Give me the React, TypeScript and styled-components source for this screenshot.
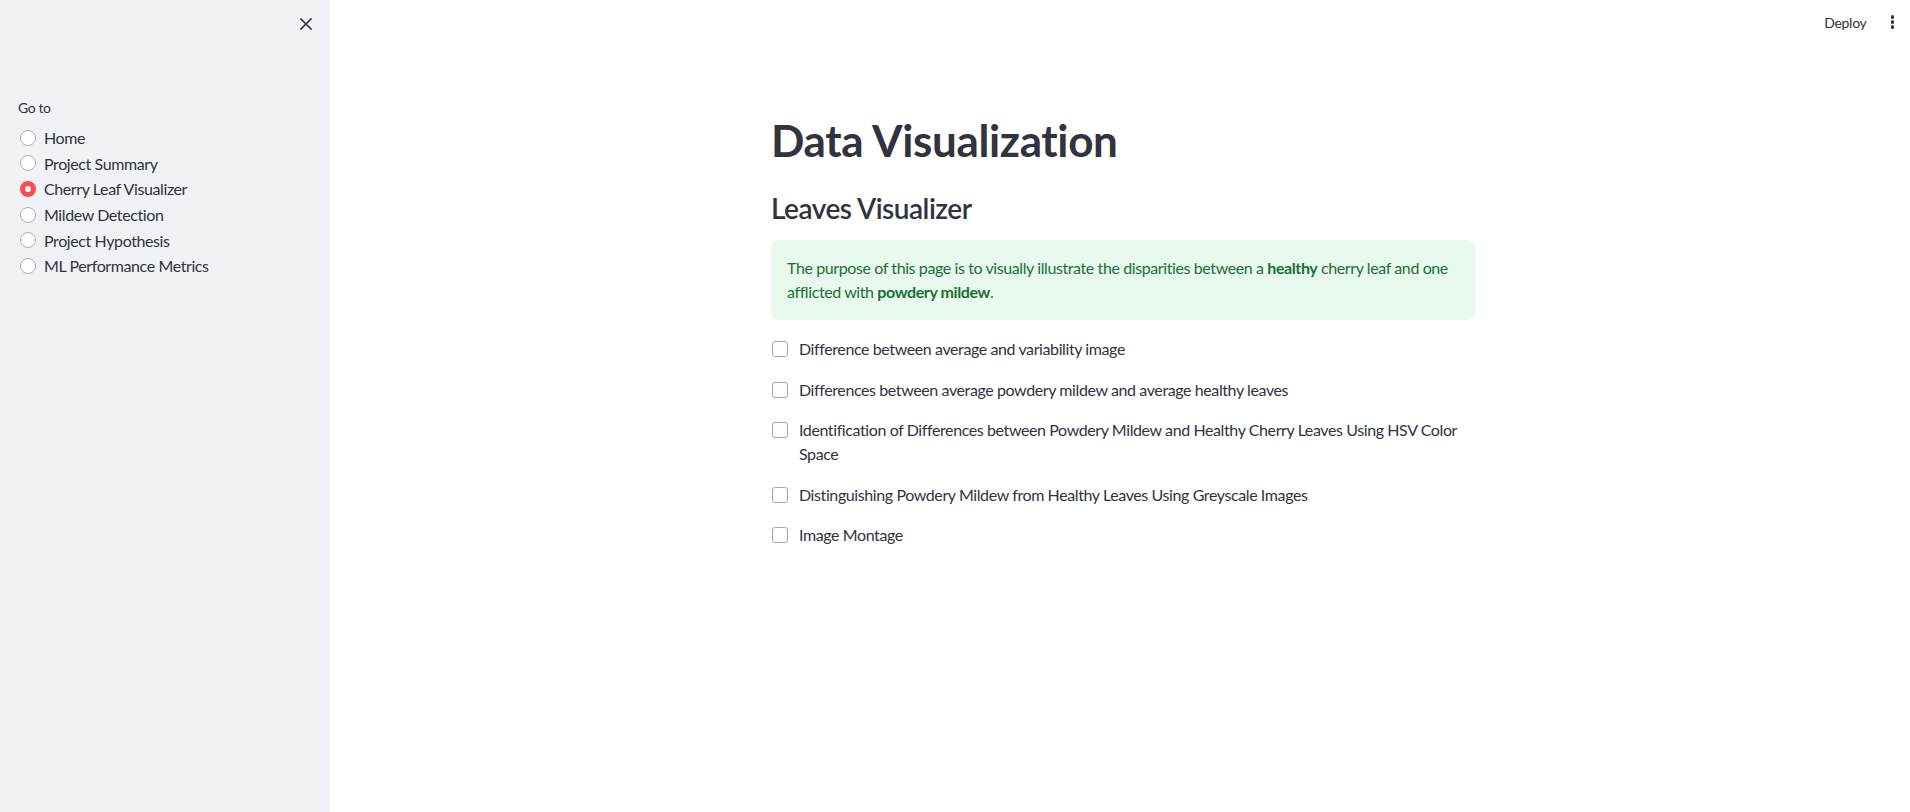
import React from "react";
import styled, { createGlobalStyle } from "styled-components";

const FONT = `Lato, "Noto Sans", sans-serif`;

const GlobalStyle = createGlobalStyle`
  html, body { margin: 0; padding: 0; }
  body {
    font-family: ${FONT};
    color: #31333f;
    background: #ffffff;
    letter-spacing: -0.025em;
  }
  * { box-sizing: border-box; }
`;

const Page = styled.div`
  display: flex;
  width: 100%;
  height: 812px;
  overflow: hidden;
`;

const Sidebar = styled.aside`
  width: 330px;
  flex-shrink: 0;
  background: #f0f2f6;
  display: flex;
  flex-direction: column;
`;

const SidebarTop = styled.div`
  height: 48px;
  display: flex;
  align-items: center;
  justify-content: flex-end;
  padding-right: 14px;
`;

const IconButton = styled.button`
  border: none;
  background: transparent;
  padding: 0;
  width: 20px;
  height: 20px;
  display: flex;
  align-items: center;
  justify-content: center;
  color: #31333f;
  cursor: pointer;
`;

const Nav = styled.div`
  padding: 50px 18px 0 18px;
  display: flex;
  flex-direction: column;
`;

const NavLabel = styled.div`
  font-size: 14px;
  line-height: 20px;
  margin-bottom: 7px;
`;

const RadioList = styled.div`
  display: flex;
  flex-direction: column;
`;

const RadioRow = styled.label`
  display: flex;
  align-items: center;
  gap: 8px;
  height: 25.6px;
  font-size: 16px;
  padding-left: 2px;
`;

const RadioDot = styled.span<{ $checked: boolean }>`
  width: 16px;
  height: 16px;
  border-radius: 50%;
  flex-shrink: 0;
  background: #ffffff;
  border: ${(p) => (p.$checked ? "5px solid #ff4b4b" : "1px solid #acaeb6")};
`;

const Main = styled.main`
  flex: 1;
  display: flex;
  flex-direction: column;
`;

const Header = styled.header`
  height: 44px;
  display: flex;
  align-items: center;
  justify-content: flex-end;
  gap: 22px;
  padding-right: 14px;
`;

const DeployButton = styled.button`
  border: none;
  background: transparent;
  font-family: ${FONT};
  font-size: 14px;
  letter-spacing: -0.02em;
  color: #31333f;
  padding: 0;
`;

const MenuDots = styled.div`
  display: flex;
  flex-direction: column;
  gap: 1.5px;
  padding: 0 2px;
`;

const Dot = styled.span`
  width: 3.5px;
  height: 3.5px;
  border-radius: 50%;
  background: #31333f;
`;

const ContentWrap = styled.div`
  display: flex;
  justify-content: center;
  padding-left: 6px;
`;

const Content = styled.div`
  width: 704px;
  padding-top: 70px;
  display: flex;
  flex-direction: column;
`;

const Title = styled.h1`
  margin: 0;
  font-size: 44px;
  line-height: 53px;
  font-weight: 700;
  letter-spacing: -0.35px;
  color: #31333f;
`;

const Subtitle = styled.h3`
  margin: 24px 0 0 0;
  font-size: 28px;
  line-height: 34px;
  font-weight: 600;
  letter-spacing: -0.5px;
  color: #31333f;
`;

const InfoBox = styled.div`
  margin-top: 15px;
  background: #e8f9ee;
  color: #177233;
  border-radius: 8px;
  padding: 16px;
  font-size: 16px;
  line-height: 24px;
`;

const CheckList = styled.div`
  margin-top: 17px;
  display: flex;
  flex-direction: column;
  gap: 16.5px;
`;

const CheckRow = styled.label`
  display: flex;
  align-items: flex-start;
  gap: 11px;
  font-size: 16px;
  line-height: 24px;
  padding-left: 1px;
`;

const CheckBox = styled.span`
  width: 16px;
  height: 16px;
  margin-top: 4px;
  flex-shrink: 0;
  border: 1px solid #a3a6ae;
  border-radius: 3px;
  background: #fff;
`;

const navItems = [
  "Home",
  "Project Summary",
  "Cherry Leaf Visualizer",
  "Mildew Detection",
  "Project Hypothesis",
  "ML Performance Metrics",
];

const checks = [
  "Difference between average and variability image",
  "Differences between average powdery mildew and average healthy leaves",
  "Identification of Differences between Powdery Mildew and Healthy Cherry Leaves Using HSV Color Space",
  "Distinguishing Powdery Mildew from Healthy Leaves Using Greyscale Images",
  "Image Montage",
];

export default function App() {
  return (
    <>
      <GlobalStyle />
      <Page>
        <Sidebar>
          <SidebarTop>
            <IconButton aria-label="Close sidebar">
              <svg width="12" height="12" viewBox="0 0 12 12">
                <path d="M1 1 L11 11 M11 1 L1 11" stroke="#31333f" strokeWidth="1.6" strokeLinecap="square" />
              </svg>
            </IconButton>
          </SidebarTop>
          <Nav>
            <NavLabel>Go to</NavLabel>
            <RadioList>
              {navItems.map((n) => (
                <RadioRow key={n}>
                  <RadioDot $checked={n === "Cherry Leaf Visualizer"} />
                  {n}
                </RadioRow>
              ))}
            </RadioList>
          </Nav>
        </Sidebar>
        <Main>
          <Header>
            <DeployButton>Deploy</DeployButton>
            <MenuDots>
              <Dot />
              <Dot />
              <Dot />
            </MenuDots>
          </Header>
          <ContentWrap>
            <Content>
              <Title>Data Visualization</Title>
              <Subtitle>Leaves Visualizer</Subtitle>
              <InfoBox>
                The purpose of this page is to visually illustrate the disparities between a <b>healthy</b> cherry leaf and one afflicted with <b>powdery mildew</b>.
              </InfoBox>
              <CheckList>
                {checks.map((c) => (
                  <CheckRow key={c}>
                    <CheckBox />
                    <span>{c}</span>
                  </CheckRow>
                ))}
              </CheckList>
            </Content>
          </ContentWrap>
        </Main>
      </Page>
    </>
  );
}
